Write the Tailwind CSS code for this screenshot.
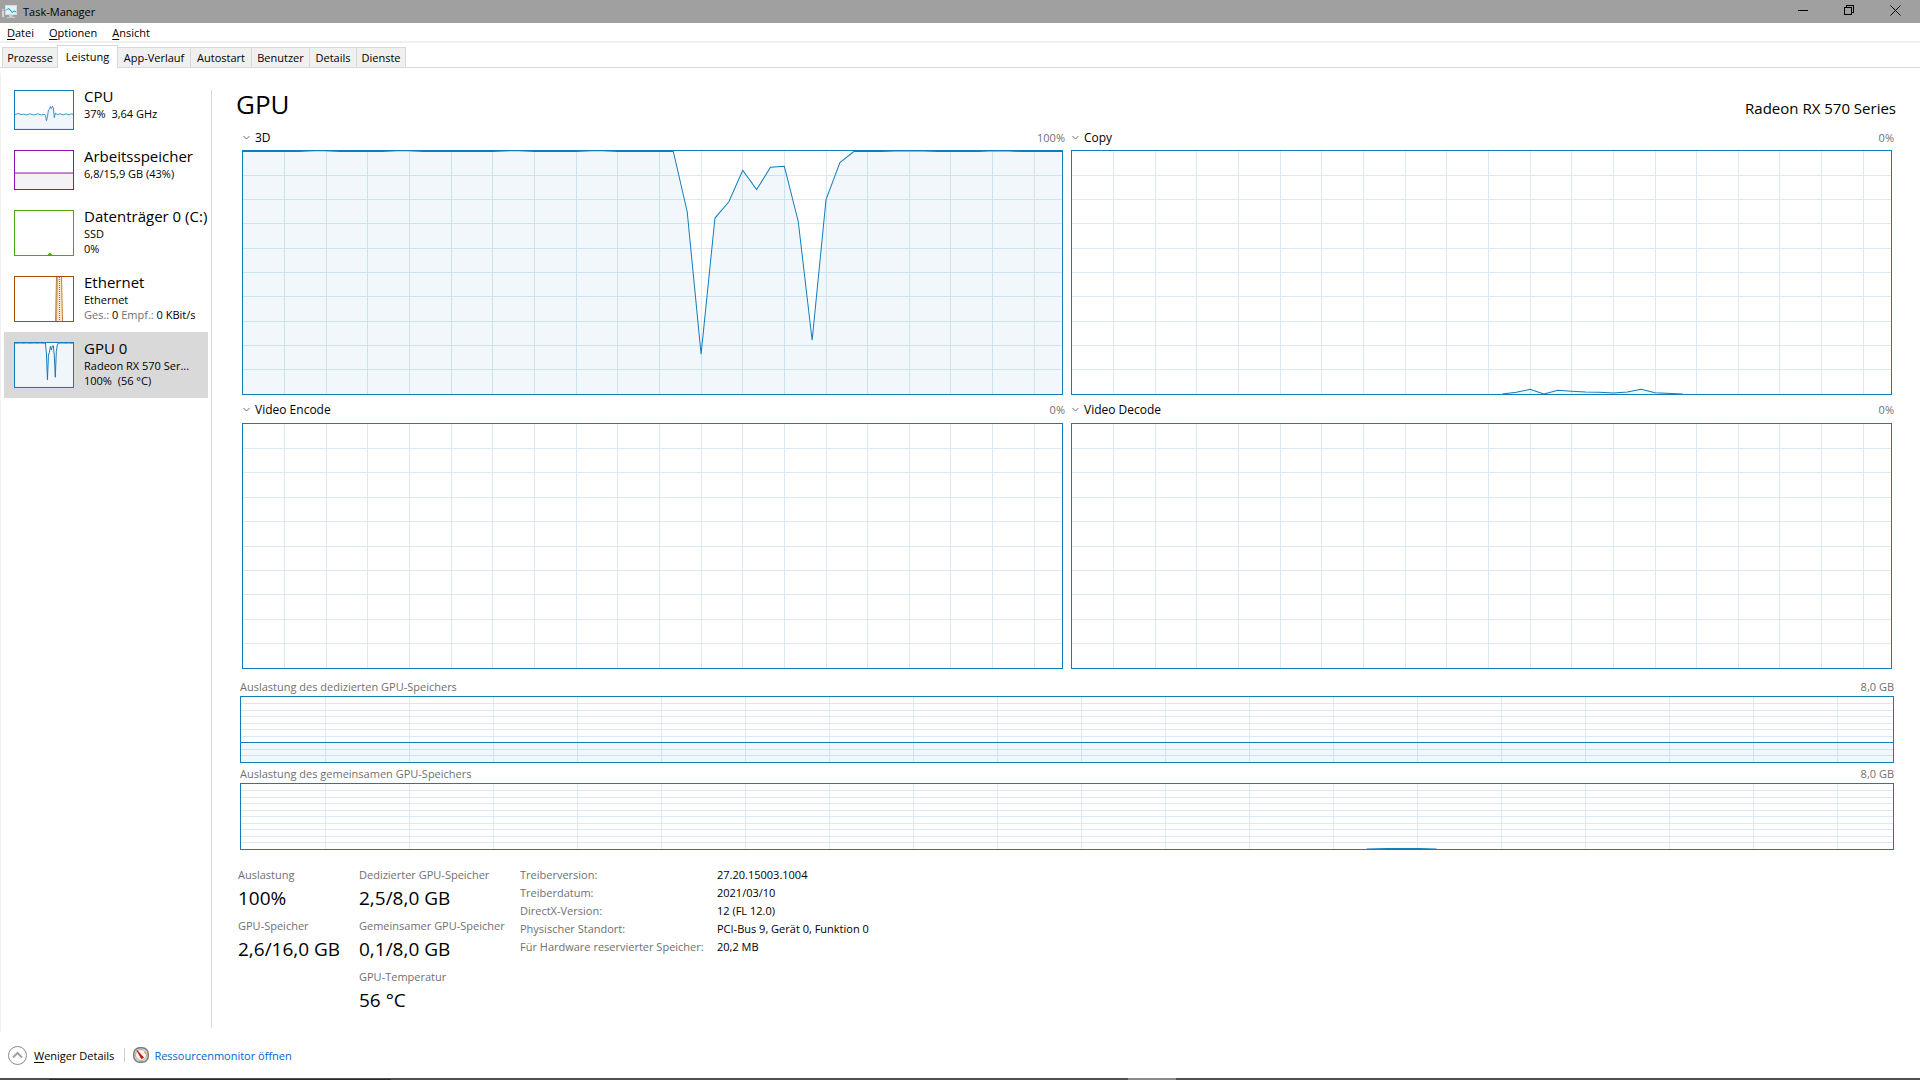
<!DOCTYPE html>
<html lang="de">
<head>
    <meta charset="UTF-8">
    <meta name="viewport" content="width=device-width, initial-scale=1.0">
    <title>Task-Manager</title>
    <script src="https://cdn.jsdelivr.net/npm/@tailwindcss/browser@4"></script>
</head>
<body class="min-h-screen flex flex-col bg-white text-black text-[11px] leading-[15px] font-['Open_Sans','Noto_Sans',sans-serif]">

    <!-- Shared chart parts: 60 samples wide, 100 percent high -->
    <svg class="hidden">
        <defs>
            <path id="grid" vector-effect="non-scaling-stroke" shape-rendering="crispEdges" fill="none" stroke="#d9eaf4" d="M3 0V100M6 0V100M9 0V100M12 0V100M15 0V100M18 0V100M21 0V100M24 0V100M27 0V100M30 0V100M33 0V100M36 0V100M39 0V100M42 0V100M45 0V100M48 0V100M51 0V100M54 0V100M57 0V100M0 10H59M0 20H59M0 30H59M0 40H59M0 50H59M0 60H59M0 70H59M0 80H59M0 90H59"/>
            <path id="load-3d" vector-effect="non-scaling-stroke" d="M-1 .2H4L5.500 -.2L7 .2H10L11.500 -.2L13 .2H18L19.500 -.2L21 .2H24L25.500 -.2L27 .2H31L32 25L33 83.600L34 27.600L35 20.900L36 7.900L37 15.900L38 6.700L39 6.300L40 29L41 77.900L42 20L43 4.800L44 .2H46L48 -.2L50 .2H53L54.500 -.2L56 .2H60V101H-1Z"/>
        </defs>
    </svg>

    <!-- Title bar -->
    <header class="flex h-[23px] shrink-0 items-center bg-[#a0a0a0] pl-0.5 pr-0.5">
        <svg class="h-4 w-4" viewBox="0 0 16 16" fill="none">
            <path d="M1 5v8" stroke="#d8d8d8" stroke-width="2"/>
            <path d="M1 6v1" stroke="#4a9a3a"/>
            <rect x="3.500" y="1.500" width="11" height="9" fill="#e4f3fb" stroke="#d9d9d9"/>
            <path d="M4 6.500l2-2 2 1 2 3 2-1.500 2 1" stroke="#1b87c5"/>
            <path d="M7 11h4v2h2v1H5v-1h2z" fill="#c9c9c9"/>
        </svg>
        <h1 class="ml-[5px] flex-1">Task-Manager</h1>
        <div class="flex self-start">
            <button class="flex h-[21px] w-[46px] items-center justify-center" aria-label="Minimieren">
                <svg class="h-[11px] w-[11px]" viewBox="0 0 11 11" stroke="#000" shape-rendering="crispEdges"><path d="M0 5.500h10"/></svg>
            </button>
            <button class="flex h-[21px] w-[46px] items-center justify-center" aria-label="Wiederherstellen">
                <svg class="h-[11px] w-[11px]" viewBox="0 0 11 11" stroke="#000" fill="none" shape-rendering="crispEdges"><path d="M.5 2.500h7v7h-7zM2.500 2.500v-2h7v7h-2"/></svg>
            </button>
            <button class="flex h-[21px] w-[46px] items-center justify-center" aria-label="Schließen">
                <svg class="h-[11px] w-[11px]" viewBox="0 0 11 11" stroke="#000" fill="none"><path d="M.5 .5l10 10M10.500 .5l-10 10"/></svg>
            </button>
        </div>
    </header>

    <!-- Menu -->
    <nav class="flex h-5 shrink-0 items-center gap-[15px] border-b-2 border-[#f0f0f0] pl-[7px]">
        <button><u class="underline-offset-2">D</u>atei</button>
        <button><u class="underline-offset-2">O</u>ptionen</button>
        <button><u class="underline-offset-2">A</u>nsicht</button>
    </nav>

    <!-- Tabs -->
    <div role="tablist" class="flex h-[25px] shrink-0 items-end border-b border-[#d9d9d9] pl-0.5">
        <button role="tab" class="h-5 w-[55px] border-l border-t border-[#d9d9d9] bg-[#f0f0f0]">Prozesse</button>
        <button role="tab" aria-selected="true" class="-mb-px h-[23px] w-[61px] border-x border-t border-[#d9d9d9] bg-white pb-0.5">Leistung</button>
        <button role="tab" class="h-5 w-[73px] border-r border-t border-[#d9d9d9] bg-[#f0f0f0]">App-Verlauf</button>
        <button role="tab" class="h-5 w-[61px] border-r border-t border-[#d9d9d9] bg-[#f0f0f0]">Autostart</button>
        <button role="tab" class="h-5 w-[58px] border-r border-t border-[#d9d9d9] bg-[#f0f0f0]">Benutzer</button>
        <button role="tab" class="h-5 w-[47px] border-r border-t border-[#d9d9d9] bg-[#f0f0f0]">Details</button>
        <button role="tab" class="h-5 w-[49px] border-r border-t border-[#d9d9d9] bg-[#f0f0f0]">Dienste</button>
    </div>

    <div class="mt-[5px] flex flex-1 border-l border-[#f0f0f0]">

        <!-- Sidebar -->
        <aside class="w-[210px] shrink-0 pl-[3px] pt-[7px]">
            <button class="flex h-[60px] w-[204px] gap-[10px] pl-[10px] text-left">
                <svg class="mt-[10px] h-10 w-[60px] shrink-0 border border-[#117dbb]" viewBox="0 0 59 100" preserveAspectRatio="none">
                    <path vector-effect="non-scaling-stroke" fill="#f1f6fa" stroke="#117dbb" stroke-opacity=".8" d="M-1 63L3 59L6 62L9 61L12 63L15 60L19 63L23 60L27 63L30 61L31 64L32 78L33 68L34 50L35 48L36 41L37 46L38 40L39 44L40 70L41 58L43 62L46 60L49 63L52 60L55 63L57 60L60 62V101H-1Z"/>
                </svg>
                <span class="flex min-w-0 flex-col pt-1.5">
                    <span class="text-[15px] leading-5">CPU</span>
                    <span class="whitespace-pre">37%  3,64 GHz</span>
                </span>
            </button>
            <button class="flex h-[60px] w-[204px] gap-[10px] pl-[10px] text-left">
                <svg class="mt-[10px] h-10 w-[60px] shrink-0 border border-[#8b12ae]" viewBox="0 0 59 100" preserveAspectRatio="none">
                    <path vector-effect="non-scaling-stroke" shape-rendering="crispEdges" fill="#f4f2f4" stroke="#8b12ae" d="M-1 58H60V102H-1Z"/>
                </svg>
                <span class="flex min-w-0 flex-col pt-1.5">
                    <span class="text-[15px] leading-5">Arbeitsspeicher</span>
                    <span>6,8/15,9 GB (43%)</span>
                </span>
            </button>
            <button class="flex h-[66px] w-[204px] gap-[10px] pl-[10px] text-left">
                <svg class="mt-[10px] h-[46px] w-[60px] shrink-0 border border-[#4da60c]" viewBox="0 0 59 100" preserveAspectRatio="none">
                    <path fill="#4da60c" d="M33 100L35 95.500H36L38 100Z"/>
                </svg>
                <span class="flex min-w-0 flex-col whitespace-nowrap pt-1.5">
                    <span class="text-[15px] leading-5">Datenträger 0 (C:)</span>
                    <span>SSD</span>
                    <span>0%</span>
                </span>
            </button>
            <button class="flex h-[66px] w-[204px] gap-[10px] pl-[10px] text-left">
                <svg class="mt-[10px] h-[46px] w-[60px] shrink-0 border border-[#a74f01]" viewBox="0 0 58 44">
                    <path fill="#f9e4d8" stroke="#a74f01" stroke-opacity=".7" d="M40.500 45L41.500 -1H46.500L47.500 45Z"/>
                    <path stroke="#a74f01" stroke-opacity=".5" d="M42.500 0L41.500 44"/>
                    <path stroke="#d8592a" stroke-dasharray="1 1" d="M44.500 0V44"/>
                </svg>
                <span class="flex min-w-0 flex-col whitespace-nowrap pt-1.5">
                    <span class="text-[15px] leading-5">Ethernet</span>
                    <span>Ethernet</span>
                    <span><span class="text-[#707070]">Ges.:</span> 0 <span class="text-[#707070]">Empf.:</span> 0 KBit/s</span>
                </span>
            </button>
            <button aria-current="true" class="flex h-[66px] w-[204px] gap-[10px] bg-[#d9d9d9] pl-[10px] text-left">
                <svg class="mt-[10px] h-[46px] w-[60px] shrink-0 border border-[#117dbb] bg-white" viewBox="0 0 59 100" preserveAspectRatio="none">
                    <use href="#load-3d" fill="#f1f6fa" stroke="#117dbb"/>
                </svg>
                <span class="flex min-w-0 flex-col whitespace-nowrap pt-1.5">
                    <span class="text-[15px] leading-5">GPU 0</span>
                    <span>Radeon RX 570 Ser...</span>
                    <span class="whitespace-pre">100%  (56 °C)</span>
                </span>
            </button>
        </aside>

        <!-- GPU page -->
        <main class="mb-1 mt-[17px] flex-1 border-l border-[#d9d9d9] pl-[28px] pr-[26px]">
            <div class="-mr-0.5 flex h-[38px] items-start justify-between">
                <h2 class="-ml-1 text-[26px] leading-7">GPU</h2>
                <p class="pt-2 text-[15px] leading-5">Radeon RX 570 Series</p>
            </div>

            <!-- Engine charts -->
            <div class="grid grid-cols-2 gap-x-1">
                <section>
                    <div class="flex h-[22px] items-center pl-[3px] pb-1">
                        <button class="flex flex-1 items-center gap-[5px] text-[12px]">
                            <svg class="h-[7px] w-[7px]" viewBox="0 0 7 7" fill="none" stroke="#707070"><path d="M.5 2l3 3 3-3"/></svg>
                            3D
                        </button>
                        <span class="text-[#707070]">100%</span>
                    </div>
                    <div class="px-0.5">
                        <svg class="h-[245px] w-full border border-[#117dbb]" viewBox="0 0 59 100" preserveAspectRatio="none">
                            <use href="#grid"/>
                            <use href="#load-3d" fill="#117dbb" fill-opacity=".06" stroke="#117dbb"/>
                        </svg>
                    </div>
                </section>
                <section>
                    <div class="flex h-[22px] items-center pl-[3px] pb-1">
                        <button class="flex flex-1 items-center gap-[5px] text-[12px]">
                            <svg class="h-[7px] w-[7px]" viewBox="0 0 7 7" fill="none" stroke="#707070"><path d="M.5 2l3 3 3-3"/></svg>
                            Copy
                        </button>
                        <span class="text-[#707070]">0%</span>
                    </div>
                    <div class="px-0.5">
                        <svg class="h-[245px] w-full border border-[#117dbb]" viewBox="0 0 59 100" preserveAspectRatio="none">
                            <use href="#grid"/>
                            <path vector-effect="non-scaling-stroke" fill="#117dbb" fill-opacity=".06" stroke="#117dbb" d="M31 100L32 99.300L33 98.100L34 100L35 98.500L36 98.900L37 99.200L38 99.300L39 99.600L40 99.200L41 98.100L42 99.500L44 100"/>
                        </svg>
                    </div>
                </section>
                <section>
                    <div class="flex h-7 items-center pl-[3px] pt-px">
                        <button class="flex flex-1 items-center gap-[5px] text-[12px]">
                            <svg class="h-[7px] w-[7px]" viewBox="0 0 7 7" fill="none" stroke="#707070"><path d="M.5 2l3 3 3-3"/></svg>
                            Video Encode
                        </button>
                        <span class="text-[#707070]">0%</span>
                    </div>
                    <div class="px-0.5">
                        <svg class="h-[246px] w-full border border-[#117dbb]" viewBox="0 0 59 100" preserveAspectRatio="none">
                            <use href="#grid"/>
                        </svg>
                    </div>
                </section>
                <section>
                    <div class="flex h-7 items-center pl-[3px] pt-px">
                        <button class="flex flex-1 items-center gap-[5px] text-[12px]">
                            <svg class="h-[7px] w-[7px]" viewBox="0 0 7 7" fill="none" stroke="#707070"><path d="M.5 2l3 3 3-3"/></svg>
                            Video Decode
                        </button>
                        <span class="text-[#707070]">0%</span>
                    </div>
                    <div class="px-0.5">
                        <svg class="h-[246px] w-full border border-[#117dbb]" viewBox="0 0 59 100" preserveAspectRatio="none">
                            <use href="#grid"/>
                        </svg>
                    </div>
                </section>
            </div>

            <!-- Memory charts -->
            <div class="flex h-[27px] items-end justify-between pb-0.5 text-[#707070]">
                <span>Auslastung des dedizierten GPU-Speichers</span>
                <span>8,0 GB</span>
            </div>
            <svg class="h-[67px] w-full border border-[#117dbb]" viewBox="0 0 59 100" preserveAspectRatio="none">
                <use href="#grid"/>
                <path vector-effect="non-scaling-stroke" shape-rendering="crispEdges" fill="#117dbb" fill-opacity=".06" stroke="#117dbb" d="M-1 70H60V102H-1Z"/>
            </svg>
            <div class="flex h-5 items-end justify-between pb-0.5 text-[#707070]">
                <span>Auslastung des gemeinsamen GPU-Speichers</span>
                <span>8,0 GB</span>
            </div>
            <svg class="h-[67px] w-full border border-[#117dbb]" viewBox="0 0 59 100" preserveAspectRatio="none">
                <use href="#grid"/>
                <path vector-effect="non-scaling-stroke" fill="none" stroke="#117dbb" d="M40.200 100L41 99.200H42L42.700 100"/>
            </svg>

            <!-- Figures -->
            <div class="-ml-0.5 mt-[17px] flex">
                <dl class="w-[121px] shrink-0">
                    <dt class="text-[#707070]">Auslastung</dt>
                    <dd class="mb-1 text-[19px] leading-8">100%</dd>
                    <dt class="text-[#707070]">GPU-Speicher</dt>
                    <dd class="mb-1 text-[19px] leading-8">2,6/16,0 GB</dd>
                </dl>
                <dl class="w-[161px] shrink-0">
                    <dt class="text-[#707070]">Dedizierter GPU-Speicher</dt>
                    <dd class="mb-1 text-[19px] leading-8">2,5/8,0 GB</dd>
                    <dt class="text-[#707070]">Gemeinsamer GPU-Speicher</dt>
                    <dd class="mb-1 text-[19px] leading-8">0,1/8,0 GB</dd>
                    <dt class="text-[#707070]">GPU-Temperatur</dt>
                    <dd class="mb-1 text-[19px] leading-8">56 °C</dd>
                </dl>
                <table class="-mt-px self-start text-left leading-[18px]">
                    <tbody>
                        <tr><th class="w-[197px] p-0 font-normal text-[#707070]">Treiberversion:</th><td class="p-0">27.20.15003.1004</td></tr>
                        <tr><th class="p-0 font-normal text-[#707070]">Treiberdatum:</th><td class="p-0">2021/03/10</td></tr>
                        <tr><th class="p-0 font-normal text-[#707070]">DirectX-Version:</th><td class="p-0">12 (FL 12.0)</td></tr>
                        <tr><th class="p-0 font-normal text-[#707070]">Physischer Standort:</th><td class="p-0">PCI-Bus 9, Gerät 0, Funktion 0</td></tr>
                        <tr><th class="p-0 font-normal text-[#707070]">Für Hardware reservierter Speicher:</th><td class="p-0">20,2 MB</td></tr>
                    </tbody>
                </table>
            </div>
        </main>
    </div>

    <!-- Footer -->
    <footer class="flex h-[46px] shrink-0 items-center pl-2">
        <button class="flex items-center gap-[7px]">
            <svg class="h-[19px] w-[19px]" viewBox="0 0 19 19" fill="none">
                <circle cx="9.500" cy="9.500" r="9" stroke="#8a8a8a"/>
                <path d="M5 11.500l4.500-4.500 4.500 4.500" stroke="#a0a0a0" stroke-width="2"/>
            </svg>
            <span><u class="underline-offset-2">W</u>eniger Details</span>
        </button>
        <span class="ml-[10px] h-[14px] w-px bg-[#d0d0d0]"></span>
        <a href="#" class="ml-2 flex items-center gap-[5px] text-[#0066cc]">
            <svg class="h-4 w-4" viewBox="0 0 16 16" fill="none">
                <rect x=".7" y=".7" width="14.600" height="14.600" rx="6" fill="#d4d4d4" stroke="#7c7c7c" stroke-width="1.400"/>
                <circle cx="8" cy="8" r="5.500" fill="#f6f4ee" stroke="#b5b0a4"/>
                <path d="M4 3.500L10.500 10.500L8.500 11.500Z" fill="#cc1212" stroke="#cc1212"/>
                <path d="M11.500 5l1 2" stroke="#d98c4a"/>
            </svg>
            Ressourcenmonitor öffnen
        </a>
    </footer>

    <!-- Taskbar edge -->
    <div class="flex h-0.5 shrink-0 bg-[#505052]">
        <span class="ml-[49px] mt-px h-px w-[342px] bg-[#2b2b2d]"></span>
        <span class="ml-auto mr-[744px] w-12 bg-[#8a8a8c]"></span>
    </div>
</body>
</html>
